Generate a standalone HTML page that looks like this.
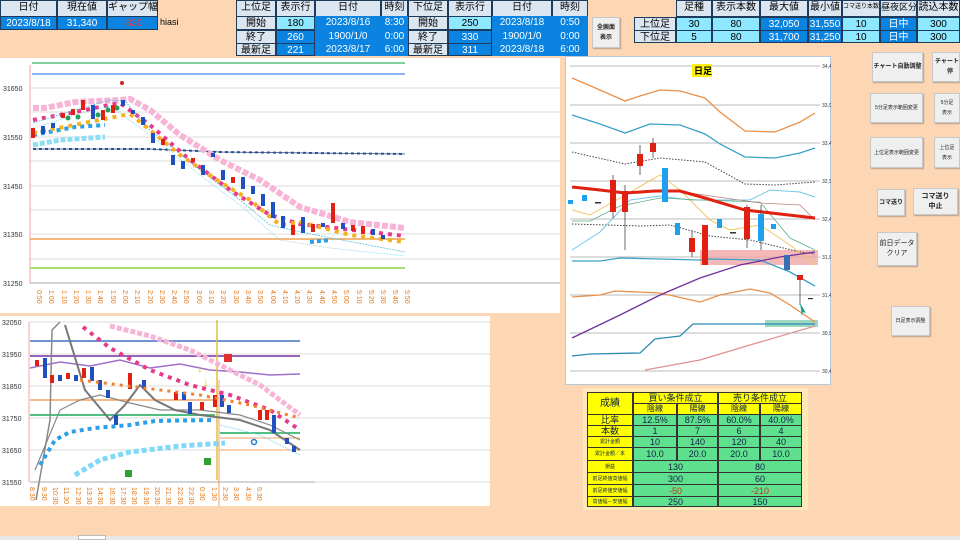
<!DOCTYPE html>
<html><head><meta charset="utf-8">
<style>
*{margin:0;padding:0;box-sizing:border-box}
body{width:960px;height:540px;overflow:hidden;background:#fdd6b3;font-family:"Liberation Sans","Noto Sans CJK JP",sans-serif;position:relative}
.c{position:absolute;font-size:10px;text-align:center;line-height:13px;border:1px solid #1f3b5c;white-space:nowrap;overflow:hidden}
.h{background:#dce6f1;color:#000}
.v{background:#0a84e0;color:#fff}
.l{background:#8ee8ff;color:#000}
.btn{position:absolute;background:#efefef;border:1px solid #c8c8c8;box-shadow:1px 1px 1px #b9a08a;font-size:6px;text-align:center;display:flex;align-items:center;justify-content:center;line-height:10px;font-weight:bold;color:#222;white-space:nowrap;overflow:hidden}
.t{position:absolute;font-size:9px;text-align:center;border:1px solid #333;display:flex;align-items:center;justify-content:center;color:#124;white-space:nowrap;overflow:hidden;line-height:10px}
.y{background:#ffff00}.g{background:#5fe08e}
svg{position:absolute}
</style></head><body>
<div class="c h" style="left:0;top:0;width:57px;height:17px">日付</div>
<div class="c h" style="left:57px;top:0;width:50px;height:17px">現在値</div>
<div class="c h" style="left:107px;top:0;width:51px;height:17px">ギャップ幅</div>
<div class="c v" style="left:0;top:16px;width:57px;height:14px">2023/8/18</div>
<div class="c v" style="left:57px;top:16px;width:50px;height:14px">31,340</div>
<div class="c v" style="left:107px;top:16px;width:51px;height:14px;color:#e04040">-330</div>
<div style="position:absolute;left:160px;top:17px;font-size:9px">hiasi</div>
<div class="c h" style="left:236px;top:0;width:40px;height:17px">上位足</div>
<div class="c h" style="left:276px;top:0;width:39px;height:17px">表示行</div>
<div class="c h" style="left:315px;top:0;width:66px;height:17px">日付</div>
<div class="c h" style="left:381px;top:0;width:27px;height:17px">時刻</div>
<div class="c h" style="left:408px;top:0;width:40px;height:17px">下位足</div>
<div class="c h" style="left:448px;top:0;width:44px;height:17px">表示行</div>
<div class="c h" style="left:492px;top:0;width:60px;height:17px">日付</div>
<div class="c h" style="left:552px;top:0;width:36px;height:17px">時刻</div>
<div class="c h" style="left:236px;top:16px;width:40px;height:14px">開始</div>
<div class="c l" style="left:276px;top:16px;width:39px;height:14px">180</div>
<div class="c v" style="left:315px;top:16px;width:66px;height:14px;border:none">2023/8/16</div>
<div class="c v" style="left:381px;top:16px;width:27px;height:14px;border:none">8:30</div>
<div class="c h" style="left:408px;top:16px;width:40px;height:14px">開始</div>
<div class="c l" style="left:448px;top:16px;width:44px;height:14px">250</div>
<div class="c v" style="left:492px;top:16px;width:60px;height:14px;border:none">2023/8/18</div>
<div class="c v" style="left:552px;top:16px;width:36px;height:14px;border:none">0:50</div>
<div class="c h" style="left:236px;top:30px;width:40px;height:14px">終了</div>
<div class="c v" style="left:276px;top:30px;width:39px;height:14px">260</div>
<div class="c v" style="left:315px;top:30px;width:66px;height:14px;border:none">1900/1/0</div>
<div class="c v" style="left:381px;top:30px;width:27px;height:14px;border:none">0:00</div>
<div class="c h" style="left:408px;top:30px;width:40px;height:14px">終了</div>
<div class="c v" style="left:448px;top:30px;width:44px;height:14px">330</div>
<div class="c v" style="left:492px;top:30px;width:60px;height:14px;border:none">1900/1/0</div>
<div class="c v" style="left:552px;top:30px;width:36px;height:14px;border:none">0:00</div>
<div class="c h" style="left:236px;top:43px;width:40px;height:13px">最新足</div>
<div class="c v" style="left:276px;top:43px;width:39px;height:13px">221</div>
<div class="c v" style="left:315px;top:43px;width:66px;height:13px;border:none">2023/8/17</div>
<div class="c v" style="left:381px;top:43px;width:27px;height:13px;border:none">6:00</div>
<div class="c h" style="left:408px;top:43px;width:40px;height:13px">最新足</div>
<div class="c v" style="left:448px;top:43px;width:44px;height:13px">311</div>
<div class="c v" style="left:492px;top:43px;width:60px;height:13px;border:none">2023/8/18</div>
<div class="c v" style="left:552px;top:43px;width:36px;height:13px;border:none">6:00</div>
<div class="btn" style="left:592px;top:17px;width:28px;height:31px;font-size:6px">全画面<br>表示</div>
<div class="c h" style="left:676px;top:0;width:36px;height:17px">足種</div>
<div class="c h" style="left:712px;top:0;width:48px;height:17px">表示本数</div>
<div class="c h" style="left:760px;top:0;width:48px;height:17px">最大値</div>
<div class="c h" style="left:808px;top:0;width:34px;height:17px">最小値</div>
<div class="c h" style="left:842px;top:0;width:38px;height:17px;font-size:6px">コマ送り本数</div>
<div class="c h" style="left:880px;top:0;width:37px;height:17px;font-size:9px">昼夜区分</div>
<div class="c h" style="left:917px;top:0;width:43px;height:17px">読込本数</div>
<div class="c h" style="left:634px;top:17px;width:42px;height:14px">上位足</div>
<div class="c h" style="left:634px;top:30px;width:42px;height:13px">下位足</div>
<div class="c l" style="left:676px;top:17px;width:36px;height:14px">30</div>
<div class="c l" style="left:712px;top:17px;width:48px;height:14px">80</div>
<div class="c v" style="left:760px;top:17px;width:48px;height:14px">32,050</div>
<div class="c v" style="left:808px;top:17px;width:34px;height:14px">31,550</div>
<div class="c l" style="left:842px;top:17px;width:38px;height:14px">10</div>
<div class="c v" style="left:880px;top:17px;width:37px;height:14px">日中</div>
<div class="c l" style="left:917px;top:17px;width:43px;height:14px">300</div>
<div class="c l" style="left:676px;top:30px;width:36px;height:13px">5</div>
<div class="c l" style="left:712px;top:30px;width:48px;height:13px">80</div>
<div class="c v" style="left:760px;top:30px;width:48px;height:13px">31,700</div>
<div class="c v" style="left:808px;top:30px;width:34px;height:13px">31,250</div>
<div class="c l" style="left:842px;top:30px;width:38px;height:13px">10</div>
<div class="c v" style="left:880px;top:30px;width:37px;height:13px">日中</div>
<div class="c l" style="left:917px;top:30px;width:43px;height:13px">300</div>

<svg style="left:0;top:58px" width="560" height="255" viewBox="0 58 560 255">
<rect x="0" y="58" width="560" height="255" fill="#fff"/>
<g stroke="#dcdcdc" stroke-width="1">
<line x1="30" x2="560" y1="88" y2="88"/><line x1="30" x2="560" y1="112" y2="112"/><line x1="30" x2="560" y1="137" y2="137"/><line x1="30" x2="560" y1="161" y2="161"/><line x1="30" x2="560" y1="186" y2="186"/><line x1="30" x2="560" y1="210" y2="210"/><line x1="30" x2="560" y1="234" y2="234"/><line x1="30" x2="560" y1="259" y2="259"/><line x1="30" x2="560" y1="283" y2="283"/>
</g>
<line x1="30" y1="65" x2="30" y2="283" stroke="#f4a0a0"/>
<g font-size="7" fill="#333"><text x="3" y="91">31650</text><text x="3" y="140">31550</text><text x="3" y="189">31450</text><text x="3" y="237">31350</text><text x="3" y="286">31250</text></g>
<line x1="32" x2="405" y1="63" y2="63" stroke="#7fcfa0" stroke-width="2"/>
<line x1="32" x2="405" y1="74" y2="74" stroke="#8ab4f8" stroke-width="2"/>
<line x1="30" x2="405" y1="239" y2="239" stroke="#f0a050" stroke-width="1.5"/>
<line x1="30" x2="405" y1="268" y2="268" stroke="#a8e070" stroke-width="2"/>
<polyline points="33,149 150,149 220,152 405,154" fill="none" stroke="#2f4f8f" stroke-width="2" stroke-dasharray="3 3"/>
<polyline points="33,149 150,149 220,152 405,154" fill="none" stroke="#2f4f8f" stroke-width="0.8"/>
<polyline points="33,108 45,108 75,102 120,100 130,99 150,110 180,135 220,160 260,180 300,207 350,222 405,228" fill="none" stroke="#f8b4d6" stroke-width="6" stroke-dasharray="6 2"/>
<polyline points="33,120 60,115 120,103 150,125 190,160 230,190 270,215 300,224 405,236" fill="none" stroke="#e8398a" stroke-width="4" stroke-dasharray="4 5"/>
<polyline points="33,123 75,110 110,100 125,101 150,130 200,170 240,200 270,225 300,232 405,252" fill="none" stroke="#5bc0e0" stroke-width="0.8" stroke-dasharray="2 1"/>
<polyline points="33,128 75,115 110,106 150,135 200,175 240,205 280,240 330,248 405,256" fill="none" stroke="#7fd4f0" stroke-width="0.8" stroke-dasharray="1 1"/>
<polyline points="33,145 60,140 105,137" fill="none" stroke="#8fdcf5" stroke-width="5" stroke-dasharray="5 2"/>
<polyline points="33,135 75,127 105,125" fill="none" stroke="#2aa0e8" stroke-width="4" stroke-dasharray="4 4"/>
<polyline points="33,133 130,114 150,130 180,155 220,182 250,200 280,225 300,222 350,235 405,242" fill="none" stroke="#f5b020" stroke-width="4" stroke-dasharray="4 5"/>
<polyline points="310,242 330,240" stroke="#2aa0e8" stroke-width="4" stroke-dasharray="4 3"/>
<circle cx="122" cy="83" r="2" fill="#d02020"/>
<g fill="#20a060"><circle cx="43" cy="131" r="2.5"/><circle cx="68" cy="118" r="2.5"/><circle cx="78" cy="117" r="2.5"/><circle cx="98" cy="115" r="2.5"/><circle cx="108" cy="110" r="2.5"/><circle cx="117" cy="108" r="2.5"/></g>
<g>
<rect x="31" y="128" width="4" height="10" fill="#e02010"/><rect x="41" y="126" width="4" height="8" fill="#2050c0"/><rect x="51" y="123" width="4" height="5" fill="#2050c0"/><rect x="61" y="113" width="4" height="5" fill="#e02010"/><rect x="71" y="109" width="4" height="6" fill="#e02010"/><rect x="81" y="100" width="4" height="10" fill="#e02010"/><rect x="91" y="105" width="4" height="14" fill="#2050c0"/><rect x="101" y="110" width="4" height="10" fill="#e02010"/><rect x="111" y="105" width="4" height="8" fill="#e02010"/><rect x="121" y="100" width="4" height="6" fill="#2050c0"/><rect x="131" y="110" width="4" height="4" fill="#2050c0"/><rect x="141" y="117" width="4" height="8" fill="#2050c0"/><rect x="151" y="133" width="4" height="10" fill="#2050c0"/><rect x="161" y="139" width="4" height="6" fill="#e02010"/><rect x="171" y="155" width="4" height="10" fill="#2050c0"/><rect x="181" y="161" width="4" height="8" fill="#2050c0"/><rect x="191" y="158" width="4" height="4" fill="#e02010"/><rect x="201" y="165" width="4" height="10" fill="#2050c0"/><rect x="211" y="153" width="4" height="4" fill="#2050c0"/><rect x="221" y="170" width="4" height="10" fill="#2050c0"/><rect x="231" y="177" width="4" height="6" fill="#e02010"/><rect x="241" y="177" width="4" height="12" fill="#2050c0"/><rect x="251" y="186" width="4" height="8" fill="#2050c0"/><rect x="261" y="194" width="4" height="12" fill="#2050c0"/><rect x="271" y="202" width="4" height="16" fill="#2050c0"/><rect x="281" y="216" width="4" height="12" fill="#2050c0"/><rect x="291" y="225" width="4" height="10" fill="#e02010"/><rect x="301" y="217" width="4" height="16" fill="#2050c0"/><rect x="311" y="224" width="4" height="8" fill="#e02010"/><rect x="321" y="223" width="4" height="4" fill="#2050c0"/><rect x="331" y="203" width="4" height="20" fill="#e02010"/><rect x="341" y="223" width="4" height="6" fill="#2050c0"/><rect x="351" y="225" width="4" height="6" fill="#e02010"/><rect x="361" y="226" width="4" height="8" fill="#e02010"/><rect x="371" y="229" width="4" height="6" fill="#2050c0"/><rect x="381" y="235" width="4" height="4" fill="#2050c0"/>
</g>
<g stroke="#999" stroke-width="0.8"><line x1="30" x2="560" y1="283" y2="283"/></g>
<g font-size="7" fill="#e07a20">
<text transform="translate(37,290) rotate(90)">0:50</text><text transform="translate(49,290) rotate(90)">1:00</text><text transform="translate(62,290) rotate(90)">1:10</text><text transform="translate(74,290) rotate(90)">1:20</text><text transform="translate(86,290) rotate(90)">1:30</text><text transform="translate(98,290) rotate(90)">1:40</text><text transform="translate(111,290) rotate(90)">1:50</text><text transform="translate(123,290) rotate(90)">2:00</text><text transform="translate(135,290) rotate(90)">2:10</text><text transform="translate(148,290) rotate(90)">2:20</text><text transform="translate(160,290) rotate(90)">2:30</text><text transform="translate(172,290) rotate(90)">2:40</text><text transform="translate(184,290) rotate(90)">2:50</text><text transform="translate(197,290) rotate(90)">3:00</text><text transform="translate(209,290) rotate(90)">3:10</text><text transform="translate(221,290) rotate(90)">3:20</text><text transform="translate(234,290) rotate(90)">3:30</text><text transform="translate(246,290) rotate(90)">3:40</text><text transform="translate(258,290) rotate(90)">3:50</text><text transform="translate(271,290) rotate(90)">4:00</text><text transform="translate(283,290) rotate(90)">4:10</text><text transform="translate(295,290) rotate(90)">4:20</text><text transform="translate(307,290) rotate(90)">4:30</text><text transform="translate(320,290) rotate(90)">4:40</text><text transform="translate(332,290) rotate(90)">4:50</text><text transform="translate(344,290) rotate(90)">5:00</text><text transform="translate(357,290) rotate(90)">5:10</text><text transform="translate(369,290) rotate(90)">5:20</text><text transform="translate(381,290) rotate(90)">5:30</text><text transform="translate(393,290) rotate(90)">5:40</text><text transform="translate(405,290) rotate(90)">5:50</text>
</g>
</svg>

<svg style="left:0;top:316px" width="490" height="190" viewBox="0 316 490 190">
<rect x="0" y="316" width="490" height="190" fill="#fff"/>
<g stroke="#dcdcdc"><line x1="30" x2="490" y1="322" y2="322"/><line x1="30" x2="490" y1="354" y2="354"/><line x1="30" x2="490" y1="386" y2="386"/><line x1="30" x2="490" y1="418" y2="418"/><line x1="30" x2="490" y1="450" y2="450"/><line x1="30" x2="490" y1="482" y2="482"/></g>
<line x1="29" y1="322" x2="29" y2="482" stroke="#f4a0a0"/>
<g font-size="7" fill="#333"><text x="2" y="325">32050</text><text x="2" y="357">31950</text><text x="2" y="389">31850</text><text x="2" y="421">31750</text><text x="2" y="453">31650</text><text x="2" y="485">31550</text></g>
<line x1="30" x2="300" y1="341" y2="341" stroke="#4070c0" stroke-width="1.5"/>
<line x1="30" x2="300" y1="356" y2="356" stroke="#7030a0" stroke-width="1.5"/>
<polyline points="30,368 60,362 90,366 120,360 150,368 180,364 210,370 240,372 270,375 300,374" fill="none" stroke="#a070c8" stroke-width="1.5"/>
<line x1="30" x2="217" y1="400" y2="400" stroke="#f5a060" stroke-width="1.5"/>
<line x1="30" x2="215" y1="415" y2="415" stroke="#50c080" stroke-width="2"/>
<line x1="220" x2="300" y1="433" y2="433" stroke="#50c080" stroke-width="2"/>
<line x1="220" x2="300" y1="438" y2="438" stroke="#f5a060"/><line x1="220" x2="300" y1="450" y2="450" stroke="#f5a060"/>
<line x1="217" x2="217" y1="320" y2="480" stroke="#e0c040" stroke-width="1.5"/>
<line x1="219" x2="219" y1="380" y2="506" stroke="#f5a060" stroke-width="1"/>
<polyline points="110,326 150,336 190,350 220,365 260,385 300,415" fill="none" stroke="#f8b4d6" stroke-width="5" stroke-dasharray="5 2"/>
<polyline points="83,327 110,348 150,370 190,385 230,395 270,410 300,430" fill="none" stroke="#e8398a" stroke-width="4" stroke-dasharray="4 5"/>
<polyline points="35,470 60,410 80,400 100,395 130,403 160,410 200,410 240,415 270,425 300,440" fill="none" stroke="#888" stroke-width="1.2"/>
<polyline points="36,500 50,420 52,330 60,322" fill="none" stroke="#888" stroke-width="1.5"/>
<polyline points="65,325 85,390 110,420 125,405 140,385 155,400 175,410 200,415 240,420 270,430 300,450" fill="none" stroke="#777" stroke-width="2"/>
<polyline points="75,475 100,460 130,452 180,446 225,443" fill="none" stroke="#7fd8f5" stroke-width="5" stroke-dasharray="5 3"/>
<polyline points="40,465 55,440 70,432 95,428 130,425 155,421 215,420" fill="none" stroke="#2aa0e8" stroke-width="4" stroke-dasharray="4 4"/>
<polyline points="220,425 260,435 300,455" fill="none" stroke="#7fd4f0" stroke-width="0.8" stroke-dasharray="2 1"/>
<g>
<rect x="35" y="360" width="4" height="6" fill="#e02010"/><rect x="43" y="358" width="4" height="20" fill="#2050c0"/><rect x="50" y="375" width="4" height="8" fill="#e02010"/><rect x="58" y="375" width="4" height="6" fill="#2050c0"/><rect x="66" y="373" width="4" height="6" fill="#e02010"/><rect x="74" y="375" width="4" height="6" fill="#2050c0"/><rect x="82" y="368" width="4" height="10" fill="#e02010"/><rect x="90" y="367" width="4" height="14" fill="#2050c0"/><rect x="98" y="380" width="4" height="10" fill="#2050c0"/><rect x="106" y="390" width="4" height="8" fill="#2050c0"/><rect x="114" y="415" width="4" height="10" fill="#2050c0"/><rect x="128" y="373" width="4" height="16" fill="#e02010"/><rect x="142" y="380" width="4" height="8" fill="#2050c0"/><rect x="174" y="392" width="4" height="8" fill="#e02010"/><rect x="182" y="392" width="4" height="8" fill="#2050c0"/><rect x="188" y="402" width="4" height="12" fill="#2050c0"/><rect x="200" y="402" width="4" height="8" fill="#e02010"/><rect x="213" y="395" width="4" height="12" fill="#e02010"/><rect x="220" y="395" width="4" height="12" fill="#2050c0"/><rect x="227" y="405" width="4" height="8" fill="#2050c0"/><rect x="258" y="410" width="4" height="10" fill="#e02010"/><rect x="265" y="410" width="4" height="10" fill="#e02010"/><rect x="272" y="415" width="4" height="18" fill="#2050c0"/><rect x="285" y="438" width="4" height="6" fill="#2050c0"/><rect x="292" y="446" width="4" height="6" fill="#2050c0"/>
</g>
<polyline points="80,380 120,385 160,390 200,395 250,405 300,418" fill="none" stroke="#f08030" stroke-width="3" stroke-dasharray="3 5"/>
<text x="197" y="372" font-size="12" fill="#f0c000">↓</text><text x="203" y="386" font-size="12" fill="#f0c000">↓</text>
<rect x="224" y="354" width="8" height="8" fill="#e03030"/><rect x="125" y="470" width="7" height="7" fill="#30a030"/><rect x="204" y="458" width="7" height="7" fill="#30a030"/>
<circle cx="254" cy="442" r="2.5" fill="none" stroke="#2080d0" stroke-width="1.5"/>
<line x1="30" x2="315" y1="482" y2="482" stroke="#999" stroke-width="0.8"/>
<g font-size="7" fill="#e07a20">
<text transform="translate(30,487) rotate(90)">8:30</text><text transform="translate(42,487) rotate(90)">9:30</text><text transform="translate(53,487) rotate(90)">10:30</text><text transform="translate(64,487) rotate(90)">11:30</text><text transform="translate(76,487) rotate(90)">12:30</text><text transform="translate(87,487) rotate(90)">13:30</text><text transform="translate(98,487) rotate(90)">14:30</text><text transform="translate(110,487) rotate(90)">16:30</text><text transform="translate(121,487) rotate(90)">17:30</text><text transform="translate(132,487) rotate(90)">18:30</text><text transform="translate(144,487) rotate(90)">19:30</text><text transform="translate(155,487) rotate(90)">20:30</text><text transform="translate(166,487) rotate(90)">21:30</text><text transform="translate(178,487) rotate(90)">22:30</text><text transform="translate(189,487) rotate(90)">23:30</text><text transform="translate(200,487) rotate(90)">0:30</text><text transform="translate(212,487) rotate(90)">1:30</text><text transform="translate(223,487) rotate(90)">2:30</text><text transform="translate(234,487) rotate(90)">3:30</text><text transform="translate(246,487) rotate(90)">4:30</text><text transform="translate(257,487) rotate(90)">5:30</text>
</g>
</svg>

<svg style="left:565px;top:56px" width="266" height="330" viewBox="565 56 266 330">
<rect x="565.5" y="56.5" width="265" height="328" fill="#fff" stroke="#b8c8d8"/>
<g stroke="#bbb"><line x1="570" x2="820" y1="66" y2="66"/><line x1="570" x2="820" y1="105" y2="105"/><line x1="570" x2="820" y1="143" y2="143"/><line x1="570" x2="820" y1="181" y2="181"/><line x1="570" x2="820" y1="219" y2="219"/><line x1="570" x2="820" y1="257" y2="257"/><line x1="570" x2="820" y1="295" y2="295"/><line x1="570" x2="820" y1="333" y2="333"/><line x1="570" x2="820" y1="371" y2="371"/></g>
<g font-size="5" fill="#333"><text x="822" y="68">34,400</text><text x="822" y="107">33,900</text><text x="822" y="145">33,400</text><text x="822" y="183">32,900</text><text x="822" y="221">32,400</text><text x="822" y="259">31,900</text><text x="822" y="297">31,400</text><text x="822" y="335">30,900</text><text x="822" y="373">30,400</text></g>
<rect x="700" y="250" width="118" height="15" fill="#f0a8a8" opacity="0.8"/>
<rect x="765" y="320" width="53" height="7" fill="#9fd8c0"/>
<polyline points="572,78 600,90 625,101 640,96 660,90 680,91 705,98 720,112 745,131 775,132 800,122 815,113" fill="none" stroke="#e8904a" stroke-width="1.3"/>
<polyline points="572,115 600,124 625,133 650,124 680,125 705,134 720,144 745,157 775,158 800,153 815,148" fill="none" stroke="#3aa0c8" stroke-width="1.3"/>
<polyline points="572,152 625,164 660,158 705,162 745,184 775,185 815,182" fill="none" stroke="#444" stroke-dasharray="1.5 1.5"/>
<polyline points="572,224 640,226 670,225 710,236 750,240 800,252 815,254" fill="none" stroke="#444" stroke-dasharray="1.5 1.5"/>
<polyline points="572,250 600,232 630,200 660,196 690,200 720,200 750,200 770,190 800,192 815,197" fill="none" stroke="#70c8e8" stroke-width="1"/>
<polyline points="572,210 590,215 620,198 660,175 680,190 710,220 730,230 760,225 790,245 815,265" fill="none" stroke="#f0c860" stroke-width="1"/>
<polyline points="572,221 590,221 620,206 660,198 700,200 760,202 790,238 815,250" fill="none" stroke="#60b080" stroke-width="0.8"/>
<polyline points="690,193 760,203 800,205 815,220" fill="none" stroke="#c08080" stroke-width="0.8"/>
<polyline points="572,187 600,190 625,193 655,191 680,191 705,198 745,210 780,214 815,218" fill="none" stroke="#e02010" stroke-width="3"/>
<polyline points="572,261 600,261 620,258 660,259 700,260 710,259 760,260 790,272 815,286" fill="none" stroke="#3aa0c8" stroke-width="1.3"/>
<polyline points="572,297 600,295 615,291 660,293 700,302 720,295 750,289 770,293 790,305 815,322" fill="none" stroke="#e8904a" stroke-width="1.3"/>
<polyline points="572,338 620,315 660,295 700,278 740,265 780,257 815,252" fill="none" stroke="#7030a0" stroke-width="1.3"/>
<polyline points="572,356 590,354 640,353 655,339 680,336 693,324 815,324" fill="none" stroke="#2a8ab0" stroke-width="1.3"/>
<polyline points="645,370 700,360 750,345 815,326" fill="none" stroke="#e09090" stroke-width="1.3"/>
<g stroke="#444" stroke-width="0.8"><line x1="613" y1="175" x2="613" y2="218"/><line x1="625" y1="185" x2="625" y2="250"/><line x1="640" y1="145" x2="640" y2="175"/><line x1="653" y1="138" x2="653" y2="158"/><line x1="705" y1="225" x2="705" y2="265"/><line x1="692" y1="230" x2="692" y2="257"/><line x1="761" y1="205" x2="761" y2="250"/><line x1="747" y1="205" x2="747" y2="248"/><line x1="800" y1="280" x2="800" y2="305"/></g>
<g>
<rect x="568" y="200" width="5" height="4" fill="#1ea0f0"/><rect x="582" y="195" width="5" height="6" fill="#1ea0f0"/><rect x="595" y="202" width="6" height="1.5" fill="#333"/><rect x="610" y="180" width="6" height="32" fill="#e02010"/><rect x="622" y="191" width="6" height="21" fill="#e02010"/><rect x="637" y="154" width="6" height="12" fill="#e02010"/><rect x="650" y="143" width="6" height="9" fill="#e02010"/><rect x="662" y="168" width="6" height="34" fill="#1ea0f0"/><rect x="675" y="223" width="5" height="12" fill="#1ea0f0"/><rect x="689" y="238" width="6" height="14" fill="#e02010"/><rect x="702" y="225" width="6" height="40" fill="#e02010"/><rect x="717" y="219" width="5" height="9" fill="#1ea0f0"/><rect x="730" y="232" width="6" height="1.5" fill="#333"/><rect x="744" y="207" width="6" height="32" fill="#e02010"/><rect x="758" y="214" width="6" height="27" fill="#1ea0f0"/><rect x="771" y="224" width="5" height="5" fill="#1ea0f0"/><rect x="784" y="255" width="6" height="15" fill="#3a70b0"/><rect x="797" y="275" width="6" height="5" fill="#e02010"/><rect x="808" y="298" width="5" height="1.2" fill="#333"/>
</g>
<path d="M800,303 l6,10 l-3,-1 l-1,4 z" fill="#10a090"/>
<rect x="692" y="64" width="20" height="13" fill="#ffef10"/>
<text x="694" y="74" font-size="9" font-weight="bold">日足</text>
</svg>

<div class="btn" style="left:872px;top:52px;width:51px;height:30px;font-size:6px">チャート自動調整</div>
<div class="btn" style="left:932px;top:52px;width:28px;height:30px;justify-content:flex-start;padding-left:2px">チャート自<br>停</div>
<div class="btn" style="left:870px;top:93px;width:53px;height:30px;font-weight:normal;font-size:5px">5分足表示範囲変更</div>
<div class="btn" style="left:934px;top:93px;width:26px;height:30px;font-weight:normal;font-size:5px">5分足<br>表示</div>
<div class="btn" style="left:870px;top:137px;width:53px;height:31px;font-weight:normal;font-size:5px">上位足表示範囲変更</div>
<div class="btn" style="left:934px;top:137px;width:26px;height:31px;font-weight:normal;font-size:5px">上位足<br>表示</div>
<div class="btn" style="left:877px;top:189px;width:28px;height:27px;font-size:6px">コマ送り</div>
<div class="btn" style="left:913px;top:188px;width:45px;height:27px;font-size:7px">コマ送り<br>中止</div>
<div class="btn" style="left:877px;top:232px;width:40px;height:34px;font-weight:normal;font-size:7px">前日データ<br>クリア</div>
<div class="btn" style="left:891px;top:306px;width:39px;height:30px;font-weight:normal;font-size:5px">日足表示調整</div>

<div style="position:absolute;left:583px;top:388px;width:225px;height:122px;background:#ffe8b8"></div>
<div class="t y" style="left:587px;top:392px;width:46px;height:23px;font-size:10px">成績</div>
<div class="t y" style="left:633px;top:392px;width:85px;height:12px;font-size:9px">買い条件成立</div>
<div class="t y" style="left:718px;top:392px;width:84px;height:12px;font-size:9px">売り条件成立</div>
<div class="t y" style="left:633px;top:403px;width:44px;height:12px;font-size:8px">陰線</div>
<div class="t y" style="left:677px;top:403px;width:41px;height:12px;font-size:8px">陽線</div>
<div class="t y" style="left:718px;top:403px;width:42px;height:12px;font-size:8px">陰線</div>
<div class="t y" style="left:760px;top:403px;width:42px;height:12px;font-size:8px">陽線</div>
<div class="t y" style="left:587px;top:414px;width:46px;height:12px;font-size:9px">比率</div>
<div class="t g" style="left:633px;top:414px;width:44px;height:12px">12.5%</div><div class="t g" style="left:677px;top:414px;width:41px;height:12px">87.5%</div><div class="t g" style="left:718px;top:414px;width:42px;height:12px">60.0%</div><div class="t g" style="left:760px;top:414px;width:42px;height:12px">40.0%</div>
<div class="t y" style="left:587px;top:425px;width:46px;height:12px;font-size:9px">本数</div>
<div class="t g" style="left:633px;top:425px;width:44px;height:12px">1</div><div class="t g" style="left:677px;top:425px;width:41px;height:12px">7</div><div class="t g" style="left:718px;top:425px;width:42px;height:12px">6</div><div class="t g" style="left:760px;top:425px;width:42px;height:12px">4</div>
<div class="t y" style="left:587px;top:436px;width:46px;height:12px;font-size:5px">累計金額</div>
<div class="t g" style="left:633px;top:436px;width:44px;height:12px">10</div><div class="t g" style="left:677px;top:436px;width:41px;height:12px">140</div><div class="t g" style="left:718px;top:436px;width:42px;height:12px">120</div><div class="t g" style="left:760px;top:436px;width:42px;height:12px">40</div>
<div class="t y" style="left:587px;top:447px;width:46px;height:14px;font-size:5px">累計金額／本</div>
<div class="t g" style="left:633px;top:447px;width:44px;height:14px">10.0</div><div class="t g" style="left:677px;top:447px;width:41px;height:14px">20.0</div><div class="t g" style="left:718px;top:447px;width:42px;height:14px">20.0</div><div class="t g" style="left:760px;top:447px;width:42px;height:14px">10.0</div>
<div class="t y" style="left:587px;top:460px;width:46px;height:13px;font-size:5px">損益</div>
<div class="t g" style="left:633px;top:460px;width:85px;height:13px">130</div><div class="t g" style="left:718px;top:460px;width:84px;height:13px">80</div>
<div class="t y" style="left:587px;top:472px;width:46px;height:13px;font-size:5px">前足終値高値幅</div>
<div class="t g" style="left:633px;top:472px;width:85px;height:13px">300</div><div class="t g" style="left:718px;top:472px;width:84px;height:13px">60</div>
<div class="t y" style="left:587px;top:484px;width:46px;height:13px;font-size:5px">前足終値安値幅</div>
<div class="t g" style="left:633px;top:484px;width:85px;height:13px;color:#d03010">-50</div><div class="t g" style="left:718px;top:484px;width:84px;height:13px;color:#d03010">-210</div>
<div class="t y" style="left:587px;top:496px;width:46px;height:11px;font-size:5px">高値幅－安値幅</div>
<div class="t g" style="left:633px;top:496px;width:85px;height:11px">250</div><div class="t g" style="left:718px;top:496px;width:84px;height:11px">150</div>

<div style="position:absolute;left:0;top:536px;width:960px;height:4px;background:#e8e8e8"></div>
<div style="position:absolute;left:78px;top:535px;width:28px;height:5px;background:#fff;border:1px solid #bbb"></div>
</body></html>
